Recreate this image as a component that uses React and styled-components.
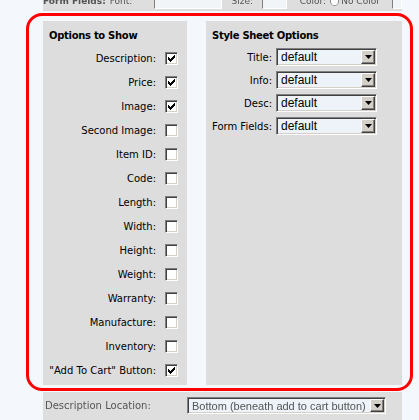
import React from "react";
import styled, { createGlobalStyle } from "styled-components";

const GlobalStyle = createGlobalStyle`
  html, body { margin: 0; padding: 0; background: #f4f7fb; }
  body {
    font-family: "DejaVu Sans", Verdana, sans-serif;
    font-size: 10px;
    color: #000;
  }
`;

const Page = styled.div`
  position: relative;
  width: 419px;
  height: 420px;
  overflow: hidden;
`;

const Column = styled.div`
  margin-left: 43px;
  width: 359px;
`;

/* blurred strips of the surrounding form, outside the marked area */
const TopStrip = styled.div`
  height: 10px;
  overflow: hidden;
  background: #dedede;
  border-bottom: 1px dotted #cfd4da;
  filter: blur(0.6px);
`;

const StripRow = styled.div`
  display: flex;
  align-items: center;
  height: 16px;
  margin-top: -7px;
  color: #555;
  font-size: 9px;
  line-height: 10px;
  white-space: nowrap;
`;

const StripText = styled.span`
  font-weight: ${(p) => (p.$bold ? "bold" : "normal")};
  margin-left: ${(p) => p.$ml || 0}px;
`;

const StripBox = styled.span`
  display: block;
  box-sizing: border-box;
  width: ${(p) => p.$w}px;
  height: 15px;
  margin-left: ${(p) => p.$ml || 0}px;
  background: #f2f5f8;
  border: 1px solid #808080;
  border-right-color: #fff;
  border-bottom-color: #fff;
`;

const StripRadio = styled.span`
  display: block;
  width: 8px;
  height: 8px;
  margin-left: ${(p) => p.$ml || 0}px;
  border-radius: 50%;
  background: #fff;
  border: 1px solid #888;
`;

const Panels = styled.div`
  margin-top: 10px;
  display: grid;
  grid-template-columns: 144px 196px;
  column-gap: 19px;
  height: 364px;
`;

const Panel = styled.section`
  background: #dddddd;
  padding: 8px 0 0 6px;
`;

const Heading = styled.h3`
  margin: 0;
  font-size: 10px;
  font-weight: bold;
  line-height: 13px;
  letter-spacing: -0.3px;
`;

const CheckList = styled.div`
  margin-top: 4px;
`;

const CheckRow = styled.label`
  display: flex;
  justify-content: flex-end;
  align-items: center;
  gap: 9px;
  height: 24px;
  padding-right: 9px;
  white-space: nowrap;
`;

const Box = styled.span`
  display: flex;
  align-items: center;
  justify-content: center;
  box-sizing: border-box;
  width: 13px;
  height: 13px;
  background: #fff;
  border: 1px solid #808080;
  border-right-color: #fff;
  border-bottom-color: #fff;
  box-shadow: inset 1px 1px 0 #404040, inset -1px -1px 0 #d4d0c8;
`;

const Check = () => (
  <svg width="7" height="7" viewBox="0 0 7 7" shapeRendering="crispEdges">
    <path d="M0 2h1v1h1v1h1v-1h1v-1h1v-1h1v-1h1v3h-1v1h-1v1h-1v1h-1v1h-1v-1h-1v-1h-1z" fill="#000" />
  </svg>
);

const Checkbox = ({ checked }) => <Box>{checked && <Check />}</Box>;

const SelectGrid = styled.div`
  margin-top: 6px;
  display: grid;
  grid-template-columns: 60px 101px;
  column-gap: 4px;
  row-gap: 5px;
  align-items: center;
`;

const FieldLabel = styled.span`
  text-align: right;
  white-space: nowrap;
`;

const Select = styled.div`
  display: flex;
  align-items: center;
  box-sizing: border-box;
  width: ${(p) => p.$w || 101}px;
  height: ${(p) => p.$h || 18}px;
  padding: 0 1px 0 4px;
  background: #edf3f9;
  border: 1px solid #808080;
  border-right-color: #fff;
  border-bottom-color: #fff;
  box-shadow: inset 1px 1px 0 #404040, inset -1px -1px 0 #d4d0c8;
  font-family: "Liberation Sans", Arial, sans-serif;
  font-size: ${(p) => p.$fs || 12}px;
`;

const SelectValue = styled.span`
  flex: 1;
  min-width: 0;
  overflow: hidden;
  white-space: nowrap;
`;

const ArrowButton = styled.span`
  display: flex;
  align-items: center;
  justify-content: center;
  flex: none;
  box-sizing: border-box;
  width: 14px;
  height: ${(p) => p.$h || 14}px;
  background: #d4d0c8;
  border: 1px solid #fff;
  border-right-color: #404040;
  border-bottom-color: #404040;
  box-shadow: inset -1px -1px 0 #808080;
`;

const Arrow = () => (
  <svg width="7" height="4" viewBox="0 0 7 4">
    <path d="M0 0 H7 L3.5 4 Z" fill="#000" />
  </svg>
);

const BottomStrip = styled.div`
  margin-top: 7px;
  height: 30px;
  background: #dedede;
  display: flex;
  align-items: flex-start;
  padding: 5px 0 0 2px;
  box-sizing: border-box;
  filter: blur(0.6px);
  color: #555;
`;

const BottomLabel = styled.span`
  width: 142px;
  line-height: 17px;
  font-size: 10px;
  white-space: nowrap;
`;

const Marker = styled.div`
  position: absolute;
  left: 26px;
  top: 13px;
  width: 387px;
  height: 378px;
  box-sizing: border-box;
  border: 3px solid #ff0000;
  border-radius: 16px;
  pointer-events: none;
`;

const options = [
  ["Description", true],
  ["Price", true],
  ["Image", true],
  ["Second Image", false],
  ["Item ID", false],
  ["Code", false],
  ["Length", false],
  ["Width", false],
  ["Height", false],
  ["Weight", false],
  ["Warranty", false],
  ["Manufacture", false],
  ["Inventory", false],
  ['"Add To Cart" Button', true],
];

const styles = ["Title", "Info", "Desc", "Form Fields"];

export default function App() {
  return (
    <Page>
      <GlobalStyle />
      <Column>
        <TopStrip>
          <StripRow>
            <StripText $bold>Form Fields:</StripText>
            <StripText $ml={4}>Font:</StripText>
            <StripBox $w={75} $ml={22} />
            <StripText $ml={9}>Size:</StripText>
            <StripBox $w={27} $ml={9} />
            <StripText $ml={13}>Color:</StripText>
            <StripRadio $ml={4} />
            <StripText $ml={2}>No Color</StripText>
            <StripBox $w={11} $ml={12} />
          </StripRow>
        </TopStrip>

        <Panels>
          <Panel>
            <Heading>Options to Show</Heading>
            <CheckList>
              {options.map(([name, checked]) => (
                <CheckRow key={name}>
                  <span>{name}:</span>
                  <Checkbox checked={checked} />
                </CheckRow>
              ))}
            </CheckList>
          </Panel>
          <Panel>
            <Heading>Style Sheet Options</Heading>
            <SelectGrid>
              {styles.map((name) => (
                <React.Fragment key={name}>
                  <FieldLabel>{name}:</FieldLabel>
                  <Select>
                    <SelectValue>default</SelectValue>
                    <ArrowButton>
                      <Arrow />
                    </ArrowButton>
                  </Select>
                </React.Fragment>
              ))}
            </SelectGrid>
          </Panel>
        </Panels>

        <BottomStrip>
          <BottomLabel>Description Location:</BottomLabel>
          <Select $w={199} $h={17} $fs={11}>
            <SelectValue>Bottom (beneath add to cart button)</SelectValue>
            <ArrowButton $h={13}>
              <Arrow />
            </ArrowButton>
          </Select>
        </BottomStrip>
      </Column>
      <Marker />
    </Page>
  );
}
